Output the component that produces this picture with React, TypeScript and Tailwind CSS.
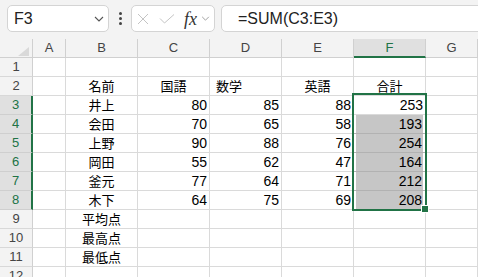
import React from 'react';

const GREEN = '#217346';

type Row = {
  n: number;
  b?: string;
  c?: string;
  d?: string;
  e?: string;
  f?: string;
};

const rows: Row[] = [
  { n: 1 },
  { n: 2, b: '名前', c: '国語', d: '数学', e: '英語', f: '合計' },
  { n: 3, b: '井上', c: '80', d: '85', e: '88', f: '253' },
  { n: 4, b: '会田', c: '70', d: '65', e: '58', f: '193' },
  { n: 5, b: '上野', c: '90', d: '88', e: '76', f: '254' },
  { n: 6, b: '岡田', c: '55', d: '62', e: '47', f: '164' },
  { n: 7, b: '釜元', c: '77', d: '64', e: '71', f: '212' },
  { n: 8, b: '木下', c: '64', d: '75', e: '69', f: '208' },
  { n: 9, b: '平均点' },
  { n: 10, b: '最高点' },
  { n: 11, b: '最低点' },
  { n: 12 },
];

const cjk = "font-['Noto_Sans_CJK_JP',sans-serif] text-[13px]";
const num = "font-['Liberation_Sans',sans-serif] text-[14px]";

const Chevron = ({ className }: { className: string }) => (
  <svg className={className} viewBox="0 0 10 6" fill="none">
    <path d="M1 1l4 4 4-4" stroke="currentColor" strokeWidth="1.1" />
  </svg>
);

const Toolbar = () => (
  <div className="h-[39px] bg-[#f3f3f3] flex items-start pt-[5px] pl-[7px] overflow-hidden">
    {/* Name box */}
    <div className="w-[102px] h-[27px] shrink-0 bg-white border border-[#d4d4d4] rounded-[5px] flex items-center pl-[6px] pr-[4px]">
      <span className="font-['Liberation_Sans',sans-serif] text-[16px] text-[#222] flex-1">F3</span>
      <Chevron className="w-[10px] h-[6px] text-[#555]" />
    </div>

    {/* vertical dots */}
    <div className="w-[22px] h-[27px] shrink-0 flex flex-col items-center justify-center gap-[2px]">
      <span className="w-[3px] h-[3px] bg-[#444] rounded-full" />
      <span className="w-[3px] h-[3px] bg-[#444] rounded-full" />
      <span className="w-[3px] h-[3px] bg-[#444] rounded-full" />
    </div>

    {/* Cancel / enter / fx */}
    <div className="w-[84px] h-[27px] shrink-0 bg-white border border-[#d4d4d4] rounded-[5px] flex items-center pl-[5px]">
      <svg className="w-[12px] h-[12px] text-[#c4c4c4]" viewBox="0 0 12 12" fill="none">
        <path d="M1 1l10 10M11 1L1 11" stroke="currentColor" strokeWidth="1" />
      </svg>
      <svg className="ml-[10px] w-[16px] h-[10px] text-[#c4c4c4]" viewBox="0 0 16 10" fill="none">
        <path d="M1 4.5l4.5 4.5L15 0.5" stroke="currentColor" strokeWidth="1" />
      </svg>
      <span className="ml-[9px] font-['Liberation_Serif',serif] italic text-[18px] leading-none text-[#333]">fx</span>
      <Chevron className="ml-[4px] w-[9px] h-[5px] text-[#999]" />
    </div>

    {/* Formula bar */}
    <div className="ml-[6px] w-[280px] h-[27px] shrink-0 bg-white border border-[#d4d4d4] rounded-[5px] flex items-center pl-[16px]">
      <span className="font-['Liberation_Sans',sans-serif] text-[16px] text-[#222]">=SUM(C3:E3)</span>
    </div>
  </div>
);

const HeaderRow = () => (
  <>
    <div className="h-[19px] bg-[#f3f3f3] border-r border-b border-[#d0d0d0] relative">
      <svg className="absolute left-[18px] top-[8px] w-[11px] h-[9px]" viewBox="0 0 11 9">
        <path d="M11 0V9H0Z" fill="#d9d9d9" />
      </svg>
    </div>
    {['A', 'B', 'C', 'D', 'E', 'F', 'G'].map((l) =>
      l === 'F' ? (
        <div
          key={l}
          className="h-[19px] bg-[#e0e0e0] border-r border-[#d0d0d0] border-b-2 border-b-[#217346] flex items-center justify-center font-['Liberation_Sans',sans-serif] text-[13px] text-[#217346]"
        >
          {l}
        </div>
      ) : (
        <div
          key={l}
          className="h-[19px] bg-[#f3f3f3] border-r border-b border-[#d0d0d0] flex items-center justify-center font-['Liberation_Sans',sans-serif] text-[13px] text-[#444]"
        >
          {l}
        </div>
      )
    )}
  </>
);

const isNum = (s?: string) => !!s && /^\d+$/.test(s);

const DataCell = ({ v, left }: { v?: string; left?: boolean }) => {
  const n = isNum(v);
  return (
    <div
      className={`h-[19px] border-r border-b border-[#dadada] flex items-center text-black overflow-hidden ${
        n ? `${num} justify-end pr-[2px]` : left ? `${cjk} justify-start pl-[6px]` : `${cjk} justify-center`
      }`}
    >
      {v}
    </div>
  );
};

const SheetRow = ({ r }: { r: Row }) => {
  const sel = r.n >= 3 && r.n <= 8;
  const shaded = r.n >= 4 && r.n <= 8;
  return (
    <>
      <div
        className={`h-[19px] border-b flex items-center justify-center font-['Liberation_Sans',sans-serif] text-[13px] ${
          sel
            ? 'bg-[#e0e0e0] border-b-[#cfcfcf] border-r-2 border-r-[#217346] text-[#217346]'
            : 'bg-[#f3f3f3] border-b-[#d8d8d8] border-r border-r-[#d0d0d0] text-[#444]'
        }`}
      >
        {r.n}
      </div>
      <DataCell />
      <DataCell v={r.b} />
      <DataCell v={r.c} />
      <DataCell v={r.d} left={r.n === 2} />
      <DataCell v={r.e} />
      {shaded ? (
        <div className={`h-[19px] border-r border-b border-[#dadada] ${r.n < 8 ? 'border-b-[#b2b2b2]' : ''} px-[2px]`}>
          <div className={`h-full bg-[#c6c6c6] flex items-center justify-end pr-[1px] ${num} text-black`}>{r.f}</div>
        </div>
      ) : (
        <DataCell v={r.f} />
      )}
      <DataCell />
    </>
  );
};

export default function App() {
  return (
    <div className="w-[478px] h-[277px] overflow-hidden bg-white">
      <Toolbar />
      <div className="relative">
        <div className="grid grid-cols-[33px_33px_72px_72px_72px_72px_72px_1fr]">
          <HeaderRow />
          {rows.map((r) => (
            <SheetRow key={r.n} r={r} />
          ))}
        </div>
        {/* selection range F3:F8 */}
        <div
          className="absolute left-[352px] top-[54px] w-[75px] h-[118px] border-2 pointer-events-none"
          style={{ borderColor: GREEN }}
        />
        <div className="absolute left-[421px] top-[166px] w-[8px] h-[8px] bg-[#217346] border border-white" />
      </div>
    </div>
  );
}
